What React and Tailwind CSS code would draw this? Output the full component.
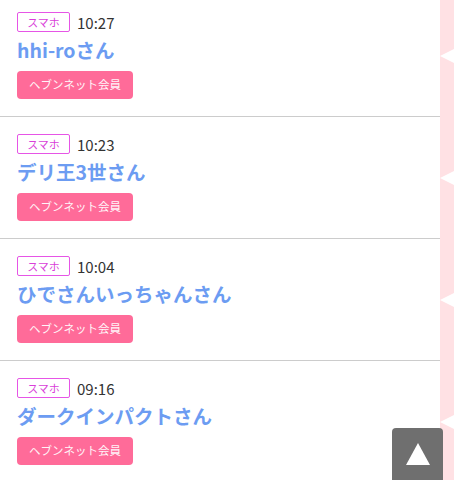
import React from "react";

const rows = [
  { time: "10:27", name: "hhi-roさん" },
  { time: "10:23", name: "デリ王3世さん" },
  { time: "10:04", name: "ひでさんいっちゃんさん" },
  { time: "09:16", name: "ダークインパクトさん" },
];

function Row({ time, name }) {
  return (
    <div className="flex">
      <div className="flex-1 border-b border-[#cccccc] pl-[17px] pt-[17px] pb-[17px]">
        <div className="flex items-center h-[20px]">
          <span className="flex items-center justify-center w-[53px] h-[20px] border border-[#e655e6] rounded-[2px] text-[11px] leading-none text-[#d93fd9]">
            スマホ
          </span>
          <span className="ml-[7px] text-[15px] leading-none text-[#333333]">{time}</span>
        </div>
        <div className="mt-[4px] h-[28px] text-[19.5px] leading-[28px] font-bold text-[#6c9cf2] whitespace-nowrap">
          {name}
        </div>
        <div className="mt-[7px] flex items-center justify-center w-[116px] h-[28px] rounded-[4px] bg-[#ff6b99] text-[11.5px] leading-none text-[#fff4f8]">
          ヘブンネット会員
        </div>
      </div>
      <div className="w-[14px] bg-[#ffe1e4] flex items-center">
        <svg width="14" height="14" viewBox="0 0 14 14" className="block">
          <polygon points="0,7 14,0 14,14" fill="#ffffff" />
        </svg>
      </div>
    </div>
  );
}

export default function App() {
  return (
    <div
      className="w-[454px] h-[480px] overflow-hidden bg-white relative"
      style={{ fontFamily: '"Noto Sans CJK JP", "Noto Sans", sans-serif' }}
    >
      <div className="-mt-[5px]">
        {rows.map((r) => (
          <Row key={r.time} {...r} />
        ))}
      </div>
      <div className="fixed bottom-0 left-[392px] w-[51px] h-[52px] bg-[#6f6f6f] rounded-t-[4px] flex items-center justify-center">
        <svg width="24" height="22" viewBox="0 0 24 22" className="block">
          <polygon points="12,0 24,22 0,22" fill="#ffffff" />
        </svg>
      </div>
    </div>
  );
}
